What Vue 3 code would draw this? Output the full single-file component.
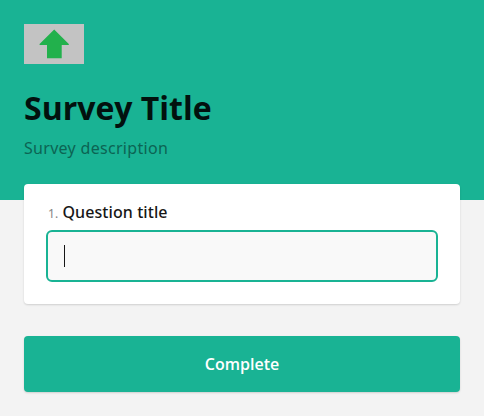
<script setup>
import { ref } from 'vue'
const answer = ref('')
</script>

<template>
  <main class="survey">
    <header class="header">
      <svg class="logo" viewBox="0 0 60 40" aria-hidden="true">
        <rect width="60" height="40" fill="#c3c3c3" />
        <path d="M30.200 5.500 L44.800 20 V21 H37.700 V34.200 H23 V21 H15.600 V20 Z" fill="#22b14c" />
      </svg>
      <h1 class="title">Survey Title</h1>
      <p class="description">Survey description</p>
    </header>
    <section class="card">
      <h2 class="question"><span class="number">1.</span><span>Question title</span></h2>
      <div class="field"><span>{{ answer }}</span><i class="caret"></i></div>
    </section>
    <button class="complete">Complete</button>
  </main>
</template>

<style>
body { background: #f3f3f3; }
</style>

<style scoped>
.survey {
  box-sizing: border-box;
  height: 416px;
  display: flex;
  flex-direction: column;
  font-family: "Open Sans", sans-serif;
  background: #f3f3f3;
}
.header {
  box-sizing: border-box;
  height: 200px;
  flex: none;
  padding: 24px 24px 0;
  background: #19b394;
}
.logo { display: block; width: 60px; height: 40px; }
.title {
  margin: 22px 0 0;
  font-size: 32px;
  line-height: 43px;
  font-weight: 700;
  color: #02110e;
}
.description {
  margin: 7px 0 0;
  font-family: "Noto Sans", "Open Sans", sans-serif;
  font-size: 16px;
  line-height: 24px;
  font-weight: 400;
  letter-spacing: 0.3px;
  color: #0c6453;
}
.card {
  box-sizing: border-box;
  height: 120px;
  flex: none;
  margin: -16px 24px 0;
  padding: 16px 22px 22px;
  background: #fff;
  border-radius: 4px;
  box-shadow: 0 1px 2px rgba(0, 0, 0, 0.15);
}
.question {
  display: flex;
  align-items: baseline;
  gap: 4px;
  margin: 0 0 6px 2px;
  font-family: "Noto Sans", "Open Sans", sans-serif;
  font-size: 16px;
  line-height: 24px;
  height: 24px;
  font-weight: 500;
  letter-spacing: 0.08px;
  color: #161616;
}
.number { font-size: 12px; font-weight: 400; letter-spacing: 0.2px; color: #858585; }
.field {
  box-sizing: border-box;
  display: flex;
  align-items: center;
  height: 52px;
  padding: 0 16px;
  border: 2px solid #19b394;
  border-radius: 6px;
  background: #f9f9f9;
}
.caret { width: 1px; height: 22px; background: #161616; }
.complete {
  flex: none;
  height: 56px;
  margin: 32px 24px 0;
  padding: 0;
  border: 0;
  border-radius: 4px;
  background: #19b394;
  box-shadow: 0 1px 2px rgba(0, 0, 0, 0.15);
  color: #fff;
  font: 650 16px/24px "Open Sans", sans-serif;
}
</style>
